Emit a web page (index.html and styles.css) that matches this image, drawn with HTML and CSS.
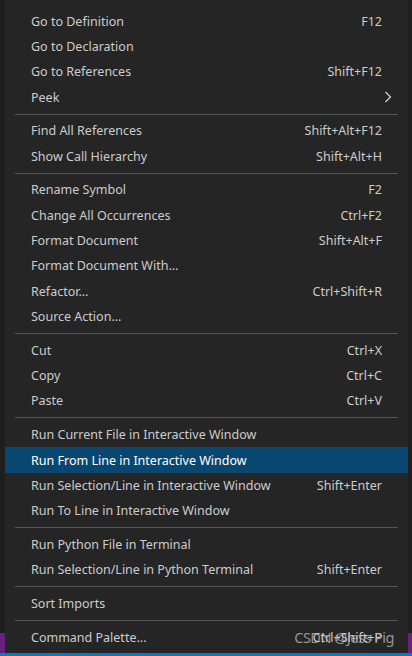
FILE: index.html
```html
<!DOCTYPE html>
<html>
<head>
<meta charset="utf-8">
<link rel="stylesheet" href="styles.css">
</head>
<body>
<div class="frame">
  <div class="side side-left"><div class="side-dark"></div><div class="side-purple"></div></div>
  <div class="menu">
    <div class="item"><span class="label">Go to Definition</span><span class="key">F12</span></div>
    <div class="item"><span class="label">Go to Declaration</span><span class="key"></span></div>
    <div class="item"><span class="label">Go to References</span><span class="key">Shift+F12</span></div>
    <div class="item"><span class="label">Peek</span><span class="sub"><svg width="8" height="12" viewBox="0 0 8 12"><path d="M1.5 1 L6.5 6 L1.5 11" fill="none" stroke="#cccccc" stroke-width="1.3"/></svg></span></div>
    <div class="sep"></div>
    <div class="item"><span class="label">Find All References</span><span class="key">Shift+Alt+F12</span></div>
    <div class="item"><span class="label">Show Call Hierarchy</span><span class="key">Shift+Alt+H</span></div>
    <div class="sep"></div>
    <div class="item"><span class="label">Rename Symbol</span><span class="key">F2</span></div>
    <div class="item"><span class="label">Change All Occurrences</span><span class="key">Ctrl+F2</span></div>
    <div class="item"><span class="label">Format Document</span><span class="key">Shift+Alt+F</span></div>
    <div class="item"><span class="label">Format Document With...</span><span class="key"></span></div>
    <div class="item"><span class="label">Refactor...</span><span class="key">Ctrl+Shift+R</span></div>
    <div class="item"><span class="label">Source Action...</span><span class="key"></span></div>
    <div class="sep"></div>
    <div class="item"><span class="label">Cut</span><span class="key">Ctrl+X</span></div>
    <div class="item"><span class="label">Copy</span><span class="key">Ctrl+C</span></div>
    <div class="item"><span class="label">Paste</span><span class="key">Ctrl+V</span></div>
    <div class="sep"></div>
    <div class="item"><span class="label">Run Current File in Interactive Window</span><span class="key"></span></div>
    <div class="item active"><span class="label">Run From Line in Interactive Window</span><span class="key"></span></div>
    <div class="item"><span class="label">Run Selection/Line in Interactive Window</span><span class="key">Shift+Enter</span></div>
    <div class="item"><span class="label">Run To Line in Interactive Window</span><span class="key"></span></div>
    <div class="sep"></div>
    <div class="item"><span class="label">Run Python File in Terminal</span><span class="key"></span></div>
    <div class="item"><span class="label">Run Selection/Line in Python Terminal</span><span class="key">Shift+Enter</span></div>
    <div class="sep"></div>
    <div class="item"><span class="label">Sort Imports</span><span class="key"></span></div>
    <div class="sep"></div>
    <div class="item last"><span class="label">Command Palette...</span><span class="key">Ctrl+Shift+P</span><span class="watermark">CSDN @Jess Pig</span></div>
  </div>
  <div class="side side-right"><div class="side-dark"></div><div class="side-purple"></div></div>
</div>
<div class="statusline"></div>
</body>
</html>
```
FILE: styles.css
```css
html, body {
  margin: 0;
  padding: 0;
  background: #1e1e1e;
  width: 412px;
  height: 656px;
  overflow: hidden;
}
.frame {
  display: flex;
  height: 653px;
}
.side {
  display: flex;
  flex-direction: column;
}
.side-left { width: 5px; }
.side-right { width: 4px; }
.side-dark { flex: 1; background: #1e1e1e; }
.side-purple { height: 20px; background: #68217a; }
.menu {
  width: 403px;
  background: #252526;
  padding-top: 8.6px;
  box-sizing: border-box;
  font-family: "Noto Sans", "Open Sans", sans-serif;
  font-size: 12.5px;
  color: #cccccc;
}
.item {
  position: relative;
  height: 25.33px;
  display: flex;
  align-items: center;
  justify-content: space-between;
  padding: 0 26px;
  white-space: nowrap;
}
.item.active {
  background: #094771;
  color: #ffffff;
}
.key { text-align: right; }
.sub {
  display: flex;
  align-items: center;
  margin-right: -10px;
}
.sep {
  height: 1px;
  background: #555555;
  margin: 3.69px 10px 3.69px 10px;
}
.watermark {
  position: absolute;
  right: 14px;
  top: 3px;
  font-size: 14.5px;
  letter-spacing: -0.5px;
  color: rgba(190, 190, 190, 0.75);
}
.statusline {
  height: 3px;
  background: #007acc;
}
```
